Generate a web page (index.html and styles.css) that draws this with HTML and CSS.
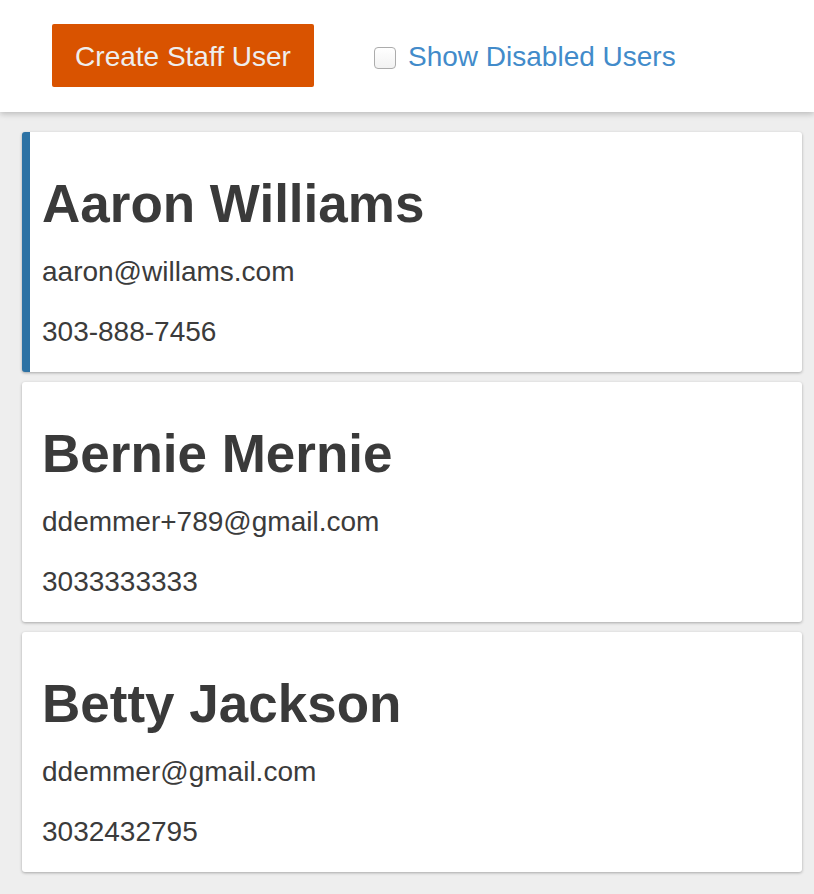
FILE: index.html
```html
<!DOCTYPE html>
<html>
<head>
<meta charset="utf-8">
<link rel="stylesheet" href="styles.css">
</head>
<body>
<header class="topbar">
  <button class="btn-create">Create Staff User</button>
  <label class="toggle">
    <input type="checkbox" class="toggle-box">
    <span class="toggle-text">Show Disabled Users</span>
  </label>
</header>
<main class="list">
  <section class="card card-active">
    <h1 class="card-name">Aaron Williams</h1>
    <p class="card-line">aaron@willams.com</p>
    <p class="card-line">303-888-7456</p>
  </section>
  <section class="card">
    <h1 class="card-name">Bernie Mernie</h1>
    <p class="card-line">ddemmer+789@gmail.com</p>
    <p class="card-line">3033333333</p>
  </section>
  <section class="card">
    <h1 class="card-name">Betty Jackson</h1>
    <p class="card-line">ddemmer@gmail.com</p>
    <p class="card-line">3032432795</p>
  </section>
</main>
</body>
</html>
```

FILE: styles.css
```css
html, body {
  margin: 0;
  padding: 0;
}
body {
  background: #eeeeee;
  font-family: "Liberation Sans", Arial, sans-serif;
  color: #3b3b3b;
  height: 894px;
  overflow: hidden;
}
.topbar {
  background: #ffffff;
  height: 112px;
  box-sizing: border-box;
  padding: 24px 0 0 52px;
  display: flex;
  align-items: flex-start;
  box-shadow: 0 2px 6px rgba(0, 0, 0, 0.22);
  position: relative;
  z-index: 1;
}
.btn-create {
  background: #d95300;
  color: #eeeeee;
  border: none;
  border-radius: 2px;
  height: 63px;
  width: 262px;
  font-family: "Liberation Sans", Arial, sans-serif;
  font-size: 28px;
  padding: 2px 0 0 0;
  cursor: pointer;
}
.toggle {
  display: flex;
  align-items: center;
  height: 63px;
  margin-left: 60px;
  gap: 12px;
  cursor: pointer;
}
.toggle-box {
  appearance: none;
  -webkit-appearance: none;
  margin: 4px 0 0 0;
  width: 22px;
  height: 22px;
  box-sizing: border-box;
  border: 1px solid #acacac;
  border-radius: 4px;
  background: linear-gradient(#ffffff, #f2f2f2);
}
.toggle-text {
  color: #428bca;
  font-size: 28px;
  padding-top: 2px;
}
.list {
  padding: 20px 12px 0 22px;
  display: flex;
  flex-direction: column;
  gap: 10px;
}
.card {
  background: #ffffff;
  border-radius: 3px;
  box-shadow: 0 1px 3px rgba(0, 0, 0, 0.3);
  padding: 20px;
  height: 240px;
  box-sizing: border-box;
}
.card-active {
  border-left: 8px solid #2d72a4;
  padding-left: 12px;
}
.card-name {
  margin: 21px 0 17px 0;
  font-size: 53px;
  font-weight: bold;
  line-height: 62px;
  color: #3a3a3a;
}
.card-line {
  margin: 0 0 20px 0;
  font-size: 28px;
  line-height: 40px;
}
.card-line:last-child {
  margin-bottom: 0;
}
```
